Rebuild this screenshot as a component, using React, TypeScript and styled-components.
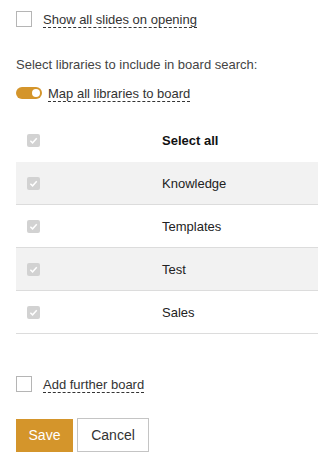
import styled, { createGlobalStyle } from 'styled-components';

const GlobalStyle = createGlobalStyle`
  body {
    margin: 0;
    background: #fff;
    font-family: 'Liberation Sans', Arial, sans-serif;
    color: #333;
  }
`;

const libraries = ['Knowledge', 'Templates', 'Test', 'Sales'];

function DisabledCheck() {
  return (
    <StyledDisabledCheck>
      <svg width='9' height='9' viewBox='0 0 10 10'>
        <path d='M1.5 5.2 L4 7.6 L8.6 2.4' fill='none' stroke='#fff' strokeWidth='1.6' />
      </svg>
    </StyledDisabledCheck>
  );
}

export default function App() {
  return (
    <>
      <GlobalStyle />
      <Panel>
        <OptionRow>
          <Box />
          <DashedLabel>Show all slides on opening</DashedLabel>
        </OptionRow>

        <Hint>Select libraries to include in board search:</Hint>

        <ToggleRow>
          <Toggle>
            <span className='knob' />
          </Toggle>
          <DashedLabel>Map all libraries to board</DashedLabel>
        </ToggleRow>

        <Table>
          <Row>
            <CheckCell>
              <DisabledCheck />
            </CheckCell>
            <NameCell $bold>Select all</NameCell>
          </Row>
          {libraries.map((name, i) => (
            <Row key={name} $shaded={i % 2 === 0} $bordered>
              <CheckCell>
                <DisabledCheck />
              </CheckCell>
              <NameCell>{name}</NameCell>
            </Row>
          ))}
        </Table>

        <OptionRow className='further'>
          <Box />
          <DashedLabel>Add further board</DashedLabel>
        </OptionRow>

        <Actions>
          <SaveButton>Save</SaveButton>
          <CancelButton>Cancel</CancelButton>
        </Actions>
      </Panel>
    </>
  );
}

const Panel = styled.div`
  padding: 11px 0 0 16px;

  .further {
    margin-top: 42px;
  }
`;

const OptionRow = styled.div`
  display: flex;
  align-items: center;
  gap: 11px;
  height: 16px;
`;

const Box = styled.span`
  width: 16px;
  height: 16px;
  box-sizing: border-box;
  border: 1px solid #b5b5b5;
  background: #fff;
`;

const DashedLabel = styled.span`
  font-size: 13px;
  line-height: 15px;
  color: #333;
  border-bottom: 1px dashed #333;
  margin-top: 2px;
`;

const Hint = styled.div`
  margin-top: 30px;
  font-size: 13px;
  line-height: 15px;
  color: #444;
`;

const ToggleRow = styled.div`
  display: flex;
  align-items: center;
  gap: 6px;
  margin-top: 14px;
  height: 14px;
`;

const Toggle = styled.span`
  position: relative;
  width: 26px;
  height: 12px;
  border-radius: 6px;
  background: #d4952b;

  .knob {
    position: absolute;
    right: 2px;
    top: 2px;
    width: 8px;
    height: 8px;
    border-radius: 50%;
    background: #fff;
  }
`;

const Table = styled.div`
  margin-top: 19px;
  display: flex;
  flex-direction: column;
`;

const Row = styled.div<{ $shaded?: boolean; $bordered?: boolean }>`
  display: grid;
  grid-template-columns: 146px 1fr;
  align-items: center;
  height: 43px;
  box-sizing: border-box;
  background: ${(p) => (p.$shaded ? '#f2f2f2' : '#fff')};
  border-bottom: ${(p) => (p.$bordered ? '1px solid #dcdcdc' : 'none')};
`;

const CheckCell = styled.div`
  padding-left: 11px;
  display: flex;
  align-items: center;
`;

const StyledDisabledCheck = styled.span`
  width: 13px;
  height: 13px;
  border-radius: 2px;
  background: #d2d2d2;
  display: flex;
  align-items: center;
  justify-content: center;
`;

const NameCell = styled.div<{ $bold?: boolean }>`
  font-size: 13px;
  font-weight: ${(p) => (p.$bold ? 700 : 400)};
  color: ${(p) => (p.$bold ? '#111' : '#222')};
`;

const Actions = styled.div`
  display: flex;
  align-items: center;
  gap: 4px;
  margin-top: 26px;
`;

const SaveButton = styled.button`
  height: 33px;
  width: 57px;
  border: none;
  background: #d4952b;
  color: #fff;
  font-family: inherit;
  font-size: 14px;
  padding: 0;
`;

const CancelButton = styled.button`
  height: 34px;
  width: 72px;
  box-sizing: border-box;
  border: 1px solid #c4c4c4;
  background: #fff;
  color: #333;
  font-family: inherit;
  font-size: 14px;
  padding: 0;
`;
